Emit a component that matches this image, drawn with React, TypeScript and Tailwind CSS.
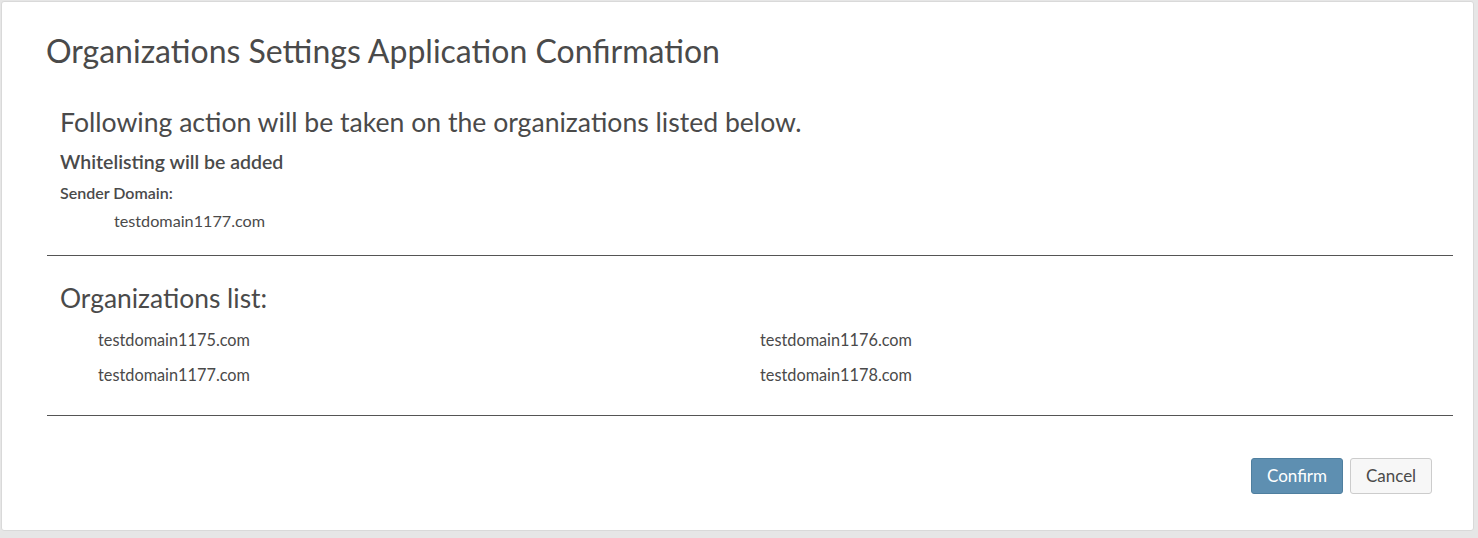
import React from 'react';

const organizations = [
  'testdomain1175.com',
  'testdomain1176.com',
  'testdomain1177.com',
  'testdomain1178.com',
];

export default function App() {
  return (
    <div
      className="w-[1478px] h-[538px] bg-[#e6e6e6] pt-[1px] pl-[1px] text-[#4a4a4a]"
      style={{ fontFamily: 'Lato, "Open Sans", sans-serif' }}
    >
      <div className="w-[1473px] h-[530px] bg-white border border-[#d9d9d9] rounded-[3px] pl-[44px] pr-[20px]">
        {/* Header */}
        <h1 className="pt-[29px] text-[32px] leading-[40px] font-normal text-[#4a4a4a]">
          Organizations Settings Application Confirmation
        </h1>

        {/* Action summary */}
        <div className="px-[14px] pt-[34px] pb-[24px]">
          <p className="text-[26.6px] leading-[34px]">
            Following action will be taken on the organizations listed below.
          </p>
          <p className="mt-[11px] text-[19.5px] leading-[24px] font-semibold">Whitelisting will be added</p>
          <p className="mt-[9px] text-[16px] leading-[20px] font-semibold">Sender Domain:</p>
          <p className="mt-[8px] pl-[54px] text-[16.2px] leading-[20px]">testdomain1177.com</p>
        </div>

        <div className="ml-[1px] border-t border-[#555555]" />

        {/* Organizations */}
        <div className="px-[14px] pt-[27px] pb-[30px]">
          <p className="text-[26.4px] leading-[30px]">Organizations list:</p>
          <div className="mt-[17px] grid grid-cols-[662px_1fr] gap-y-[15px] pl-[38px] text-[16.3px] leading-[20px]">
            {organizations.map((org) => (
              <div key={org}>{org}</div>
            ))}
          </div>
        </div>

        <div className="ml-[1px] border-t border-[#555555]" />

        {/* Footer buttons */}
        <div className="flex justify-end gap-[7px] pt-[42px] pr-[21px]">
          <button className="h-[36px] w-[92px] rounded-[3px] bg-[#5e8fb1] border border-[#4f7f9f] text-white text-[17px]">
            Confirm
          </button>
          <button className="h-[36px] w-[82px] rounded-[3px] bg-[#f7f7f7] border border-[#cccccc] text-[#4a4a4a] text-[17px]">
            Cancel
          </button>
        </div>
      </div>
    </div>
  );
}
